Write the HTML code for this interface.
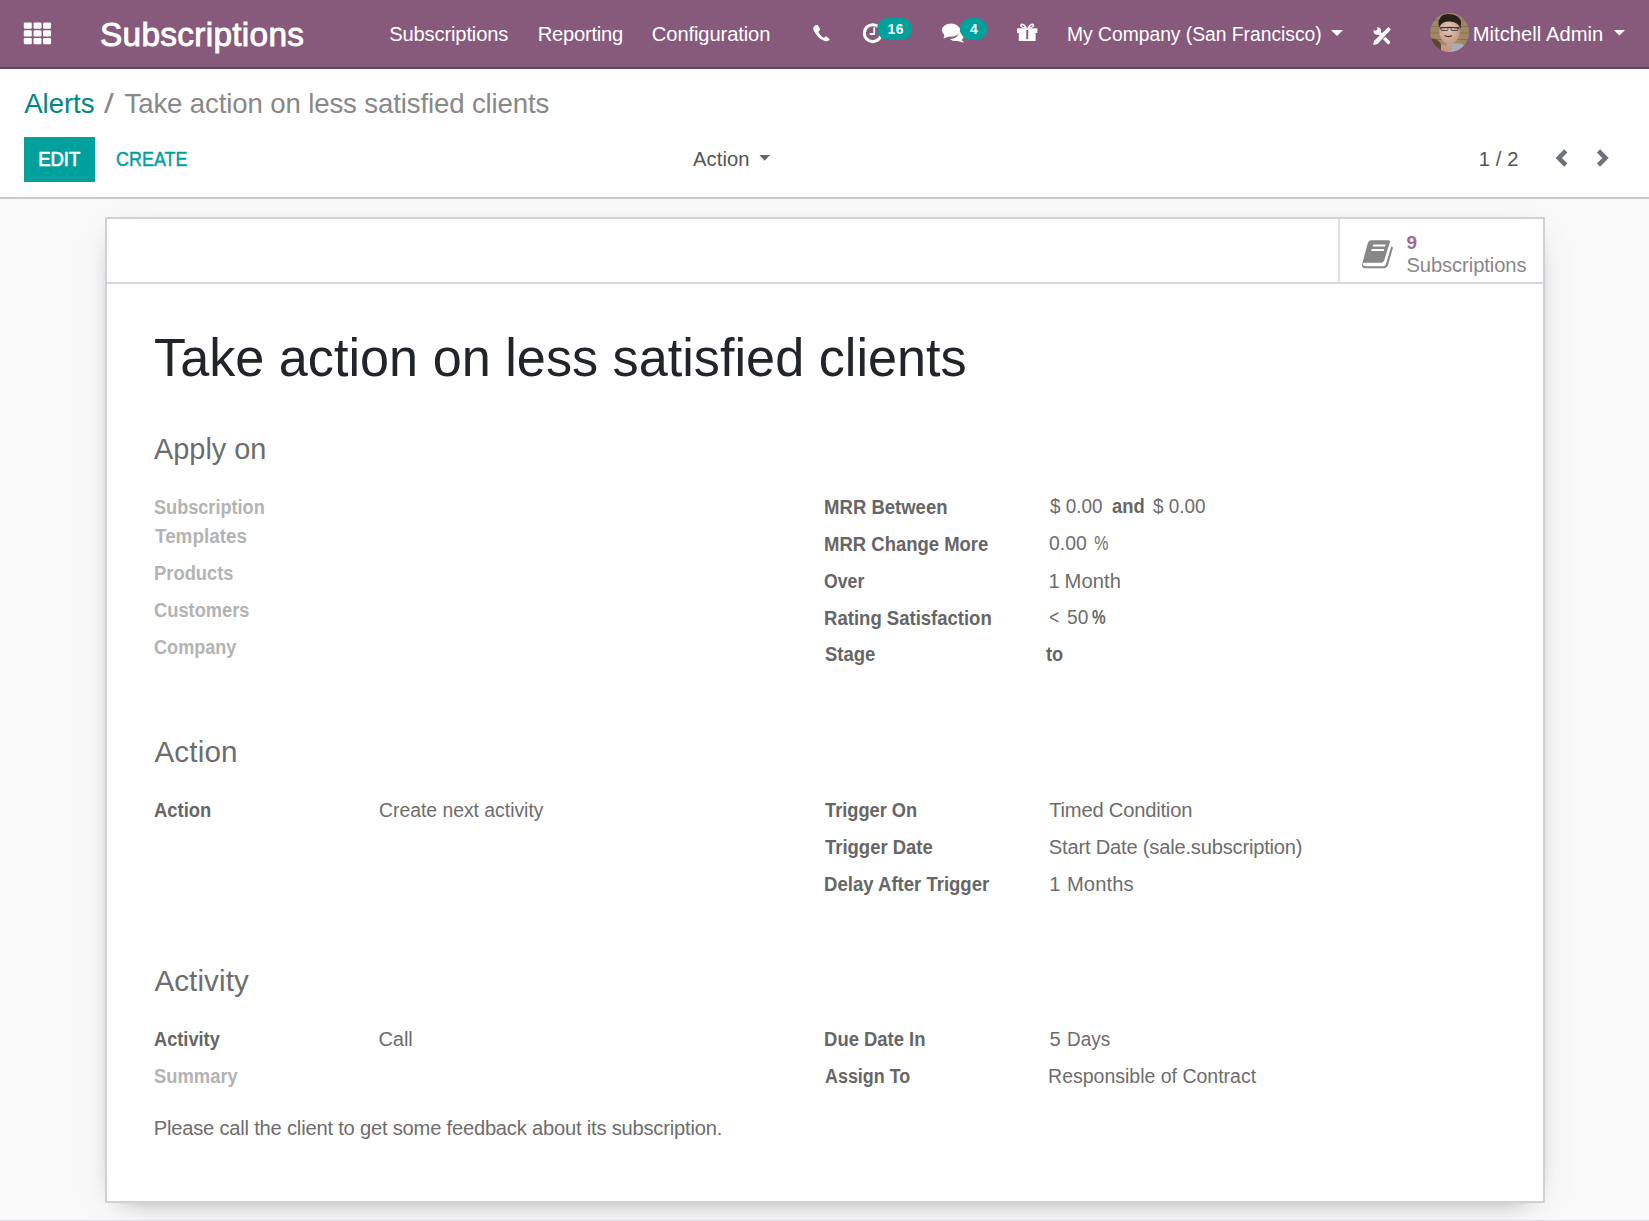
<!DOCTYPE html>
<html><head><meta charset="utf-8">
<style>
html,body{margin:0;padding:0;}
body{width:1649px;height:1221px;overflow:hidden;position:relative;background:#f9f9f9;font-family:"Liberation Sans",sans-serif;}
.t{position:absolute;white-space:pre;line-height:1;font-family:"Liberation Sans",sans-serif;}
.abs{position:absolute;}
#nav{left:0;top:0;width:1649px;height:67px;background:#875a7b;border-bottom:2px solid #62445a;}
#cp{left:0;top:69px;width:1649px;height:128px;background:#fff;border-bottom:2px solid #cacaca;}
#edit{left:24px;top:137px;width:71px;height:45px;background:#00a09d;}
#sheet{left:105px;top:217px;width:1436px;height:982px;background:#fff;border:2px solid #cdd2d9;box-shadow:0 8px 30px -18px rgba(0,0,0,0.62);}
#bbox{left:107px;top:282px;width:1436px;height:2px;background:#d3d8de;}
#statb{left:1338px;top:219px;width:2px;height:63px;background:#dde1e6;}
#botline{left:0;top:1220px;width:1649px;height:1px;background:#dadee3;}
</style></head><body>
<div id="nav" class="abs"></div>
<div id="cp" class="abs"></div>
<div id="edit" class="abs"></div>
<div id="sheet" class="abs"></div>
<div id="bbox" class="abs"></div>
<div id="statb" class="abs"></div>
<div id="botline" class="abs"></div>

<!-- grid icon -->
<svg class="abs" style="left:0;top:0" width="1649" height="69" viewBox="0 0 1649 69">
 <g fill="#fff">
  <rect x="23.8" y="22.5" width="8" height="6.3" rx="1.3"/><rect x="33.5" y="22.5" width="8" height="6.3" rx="1.3"/><rect x="43.1" y="22.5" width="8" height="6.3" rx="1.3"/>
  <rect x="23.8" y="30.2" width="8" height="6.3" rx="1.3"/><rect x="33.5" y="30.2" width="8" height="6.3" rx="1.3"/><rect x="43.1" y="30.2" width="8" height="6.3" rx="1.3"/>
  <rect x="23.8" y="37.9" width="8" height="6.3" rx="1.3"/><rect x="33.5" y="37.9" width="8" height="6.3" rx="1.3"/><rect x="43.1" y="37.9" width="8" height="6.3" rx="1.3"/>
 </g>
 <!-- phone -->
 <g fill="#fff">
  <path d="M815.5 25.2 L817.8 24.9 L820.2 29.6 L818.3 31.9 Q820.5 36 823.8 38 L826 36.3 L829.6 39 L829.2 40.3 Q827.5 41.6 825.3 41.3 Q816.8 38.3 813.2 29.2 Q812.8 26.8 815.5 25.2 Z"/>
 </g>
 <!-- clock -->
 <circle cx="872.8" cy="33.2" r="8.5" fill="none" stroke="#fff" stroke-width="3.1"/>
 <path d="M874.2 27.6 V34 H869.6" fill="none" stroke="#fff" stroke-width="1.8"/>
 <rect x="877" y="18" width="35" height="22" rx="11" fill="#00a09d"/>
 <!-- comments -->
 <g fill="#fff">
  <ellipse cx="951" cy="30.2" rx="9.1" ry="6.6"/>
  <path d="M944.5 34 L943.5 38.8 L950 36 Z"/>
  <path d="M957 31 Q963.5 32 963.8 36.5 Q963.6 38.6 961.5 40 L964.3 42.8 L957.5 41 Q953 41.5 950 39.2 Q957.5 38.5 959 33 Z"/>
 </g>
 <rect x="960" y="18" width="27" height="22" rx="11" fill="#00a09d"/>
 <!-- gift -->
 <g fill="#fff">
  <rect x="1017" y="28.3" width="20.4" height="4.6"/>
  <rect x="1018.8" y="32.4" width="16.8" height="8.6"/>
  <path d="M1027.2 28.6 Q1022 28.5 1020.3 26.3 Q1019.8 23.5 1022.3 23.6 Q1025 23.9 1027.2 28.3 Z M1022.2 25.3 Q1021.4 25.6 1022 26.5 Q1023.4 27.3 1025 27.3 Q1023.7 25.3 1022.2 25.3 Z" fill-rule="evenodd"/>
  <path d="M1027.2 28.6 Q1032.4 28.5 1034.1 26.3 Q1034.6 23.5 1032.1 23.6 Q1029.4 23.9 1027.2 28.3 Z M1032.2 25.3 Q1033 25.6 1032.4 26.5 Q1031 27.3 1029.4 27.3 Q1030.7 25.3 1032.2 25.3 Z" fill-rule="evenodd"/>
 </g>
 <rect x="1026.3" y="30" width="1.9" height="9.3" fill="#875a7b"/>
 <!-- carets -->
 <path d="M1331 30 H1343 L1337 36 Z" fill="#fff"/>
 <path d="M1613.8 30 H1625 L1619.4 35.6 Z" fill="#fff"/>
 <!-- tools -->
 <g fill="#fff">
  <path d="M1388.4 26.9 L1390.9 29.45 L1377.6 44 L1373 44.9 L1374.2 40.8 Z"/>
  <path d="M1382.9 39.2 L1385.4 36.9 L1390 41.4 Q1390.6 43.3 1389.2 44.1 Q1388.2 44.6 1387.3 43.8 Z"/>
  <circle cx="1377.3" cy="31" r="3.75"/>
  <path d="M1377.3 31 L1382.2 35.9" stroke="#fff" stroke-width="3.2"/>
 </g>
 <circle cx="1375.3" cy="28.7" r="2.15" fill="#875a7b"/>
 <!-- avatar -->
 <defs>
  <clipPath id="av"><circle cx="1449.6" cy="32.5" r="19.4"/></clipPath>
  <radialGradient id="face" cx="0.45" cy="0.4" r="0.65"><stop offset="0" stop-color="#e4c6bd"/><stop offset="1" stop-color="#c39683"/></radialGradient>
 </defs>
 <g clip-path="url(#av)">
  <rect x="1429" y="12" width="41" height="41" fill="#a08866"/>
  <g stroke="#806850" stroke-width="1" opacity="0.7">
   <path d="M1429 20 H1470 M1429 26.5 H1470 M1429 33 H1470 M1429 39.5 H1470 M1429 46 H1470"/>
  </g>
  <path d="M1430 38 Q1437 38 1441 44 L1442 53 H1429 Z" fill="#5e4434"/>
  <path d="M1445 45 Q1453 42 1463 44 L1466 53 H1446 Z" fill="#a7aeb5"/>
  <path d="M1441 44 Q1447 47 1452 45 L1452 53 H1441 Z" fill="#c39a86"/>
  <ellipse cx="1449.5" cy="31" rx="10.3" ry="13.2" fill="url(#face)"/>
  <path d="M1438.5 25 Q1438 15 1447 14 Q1458 13.5 1461 21 L1460.8 29 Q1459 22.5 1450 21.6 Q1442 21.3 1439.5 27 Z" fill="#2b1f19"/>
  <path d="M1439.5 27.8 Q1449.5 26.8 1459.5 28" stroke="#3e322e" stroke-width="1.3" fill="none"/>
  <rect x="1441" y="27.5" width="7" height="3" rx="1" fill="none" stroke="#4a3c38" stroke-width="0.9"/>
  <rect x="1451" y="27.5" width="7" height="3" rx="1" fill="none" stroke="#4a3c38" stroke-width="0.9"/>
  <path d="M1444.5 35.6 Q1448 37.6 1452 35.8" stroke="#4e2a26" stroke-width="1.1" fill="none"/>
 </g>
</svg>
<!-- control panel icons -->
<svg class="abs" style="left:0;top:69px" width="1649" height="130" viewBox="0 69 1649 130">
 <path d="M759.4 155 H770 L764.7 160.7 Z" fill="#666"/>
 <path d="M1567.4 152.5 L1564.2 149.3 L1555.6 158 L1564.2 166.8 L1567.4 163.6 L1562 158 Z" fill="#6c7278"/>
 <path d="M1596.9 152.5 L1600.1 149.3 L1608.7 158 L1600.1 166.8 L1596.9 163.6 L1602.3 158 Z" fill="#6c7278"/>
</svg>
<!-- book icon -->
<svg class="abs" style="left:1355px;top:235px" width="45" height="40" viewBox="1355 235 45 40">
 <g fill="#878787">
  <path d="M1371 240.2 H1388.8 Q1390.8 240.5 1389.6 243 L1384.2 260.5 Q1383.3 262.8 1381 262.8 H1364.3 Q1362.2 262.8 1362.8 264.8 Q1363.5 266.2 1365.5 266.2 H1383.7 Q1385.3 266.1 1385.8 264.6 L1391.3 246.2 L1393 247.6 L1387.8 265.8 Q1386.8 268.2 1384 268.2 H1364.5 Q1361.2 268 1362.2 263.8 L1367.8 243 Q1368.8 240.2 1371 240.2 Z"/>
 </g>
 <g fill="#fff">
  <rect x="1373" y="244.5" width="12.5" height="2" transform="skewX(-17)" style="transform-box:fill-box;transform-origin:center"/>
  <rect x="1371.5" y="249" width="12.5" height="2" transform="skewX(-17)" style="transform-box:fill-box;transform-origin:center"/>
 </g>
</svg>
<div class="t" style="left:99.96px;top:18.00px;font-size:33.4px;color:#ffffff;letter-spacing:0.299px;-webkit-text-stroke:0.9px #fff;">Subscriptions</div>
<div class="t" style="left:389.17px;top:24.00px;font-size:20.15px;color:#ffffff;letter-spacing:-0.142px;">Subscriptions</div>
<div class="t" style="left:537.73px;top:24.00px;font-size:20.15px;color:#ffffff;letter-spacing:-0.220px;">Reporting</div>
<div class="t" style="left:651.86px;top:24.00px;font-size:20.15px;color:#ffffff;letter-spacing:-0.107px;">Configuration</div>
<div class="t" style="left:1066.63px;top:24.00px;font-size:20.15px;color:#ffffff;transform:scaleX(0.956);transform-origin:1.57px 0;">My Company (San Francisco)</div>
<div class="t" style="left:1472.63px;top:24.00px;font-size:20.15px;color:#ffffff;letter-spacing:0.061px;">Mitchell Admin</div>
<div class="t" style="left:887.54px;top:23.00px;font-size:13.8px;color:#ffffff;font-weight:bold;letter-spacing:0.456px;">16</div>
<div class="t" style="left:969.90px;top:23.00px;font-size:13.8px;color:#ffffff;font-weight:bold;transform:scaleX(1.005);transform-origin:0.00px 0;">4</div>
<div class="t" style="left:24.30px;top:90.00px;font-size:27.6px;color:#008784;letter-spacing:-0.077px;">Alerts</div>
<div class="t" style="left:104.00px;top:90.00px;font-size:27.6px;color:#888888;transform:scaleX(1.288);transform-origin:0.00px 0;">/</div>
<div class="t" style="left:124.57px;top:90.00px;font-size:27.6px;color:#888888;letter-spacing:-0.129px;">Take action on less satisfied clients</div>
<div class="t" style="left:38.03px;top:149.00px;font-size:20.15px;color:#ffffff;transform:scaleX(0.916);transform-origin:1.57px 0;-webkit-text-stroke:0.7px #fff;">EDIT</div>
<div class="t" style="left:115.86px;top:149.00px;font-size:20.15px;color:#00a09d;transform:scaleX(0.889);transform-origin:0.94px 0;-webkit-text-stroke:0.45px #00a09d;">CREATE</div>
<div class="t" style="left:693.00px;top:149.00px;font-size:20.15px;color:#555555;letter-spacing:0.106px;">Action</div>
<div class="t" style="left:1478.64px;top:149.00px;font-size:20.15px;color:#555555;letter-spacing:0.142px;">1 / 2</div>
<div class="t" style="left:1406.51px;top:233.00px;font-size:19px;color:#9b6d8e;font-weight:bold;">9</div>
<div class="t" style="left:1406.47px;top:255.00px;font-size:20.15px;color:#888888;letter-spacing:-0.067px;">Subscriptions</div>
<div class="t" style="left:154.36px;top:331.00px;font-size:53.5px;color:#212529;transform:scaleX(0.976);transform-origin:0.84px 0;">Take action on less satisfied clients</div>
<div class="t" style="left:154.30px;top:434.00px;font-size:29.6px;color:#6d6d6d;transform:scaleX(0.976);transform-origin:0.00px 0;">Apply on</div>
<div class="t" style="left:154.49px;top:497.00px;font-size:20.15px;color:#b3b3b3;font-weight:bold;transform:scaleX(0.899);transform-origin:0.31px 0;">Subscription</div>
<div class="t" style="left:154.80px;top:526.00px;font-size:20.15px;color:#b3b3b3;font-weight:bold;transform:scaleX(0.937);transform-origin:0.00px 0;">Templates</div>
<div class="t" style="left:153.54px;top:563.00px;font-size:20.15px;color:#b3b3b3;font-weight:bold;transform:scaleX(0.910);transform-origin:1.26px 0;">Products</div>
<div class="t" style="left:154.17px;top:600.00px;font-size:20.15px;color:#b3b3b3;font-weight:bold;transform:scaleX(0.907);transform-origin:0.63px 0;">Customers</div>
<div class="t" style="left:154.17px;top:637.00px;font-size:20.15px;color:#b3b3b3;font-weight:bold;transform:scaleX(0.897);transform-origin:0.63px 0;">Company</div>
<div class="t" style="left:823.84px;top:497.00px;font-size:20.15px;color:#666666;font-weight:bold;transform:scaleX(0.919);transform-origin:1.26px 0;">MRR Between</div>
<div class="t" style="left:823.84px;top:534.00px;font-size:20.15px;color:#666666;font-weight:bold;transform:scaleX(0.917);transform-origin:1.26px 0;">MRR Change More</div>
<div class="t" style="left:824.47px;top:571.00px;font-size:20.15px;color:#666666;font-weight:bold;transform:scaleX(0.875);transform-origin:0.63px 0;">Over</div>
<div class="t" style="left:823.84px;top:608.00px;font-size:20.15px;color:#666666;font-weight:bold;transform:scaleX(0.919);transform-origin:1.26px 0;">Rating Satisfaction</div>
<div class="t" style="left:824.79px;top:644.00px;font-size:20.15px;color:#666666;font-weight:bold;transform:scaleX(0.916);transform-origin:0.31px 0;">Stage</div>
<div class="t" style="left:1049.80px;top:496.00px;font-size:20.15px;color:#6d6d6d;transform:scaleX(0.938);transform-origin:0.00px 0;">$ 0.00</div>
<div class="t" style="left:1111.69px;top:496.00px;font-size:20.15px;color:#666666;font-weight:bold;transform:scaleX(0.912);transform-origin:0.31px 0;">and</div>
<div class="t" style="left:1153.30px;top:496.00px;font-size:20.15px;color:#6d6d6d;transform:scaleX(0.938);transform-origin:0.00px 0;">$ 0.00</div>
<div class="t" style="left:1049.17px;top:533.00px;font-size:20.15px;color:#6d6d6d;transform:scaleX(0.961);transform-origin:0.63px 0;">0.00</div>
<div class="t" style="left:1094.27px;top:533.00px;font-size:20.15px;color:#6d6d6d;transform:scaleX(0.791);transform-origin:0.63px 0;">%</div>
<div class="t" style="left:1048.54px;top:571.00px;font-size:20.15px;color:#6d6d6d;">1</div>
<div class="t" style="left:1064.53px;top:571.00px;font-size:20.15px;color:#6d6d6d;letter-spacing:0.101px;">Month</div>
<div class="t" style="left:1048.86px;top:607.00px;font-size:20.15px;color:#6d6d6d;transform:scaleX(0.844);transform-origin:0.94px 0;">&lt;</div>
<div class="t" style="left:1067.07px;top:607.00px;font-size:20.15px;color:#6d6d6d;transform:scaleX(0.949);transform-origin:0.63px 0;">50</div>
<div class="t" style="left:1092.29px;top:607.00px;font-size:20.15px;color:#666666;font-weight:bold;transform:scaleX(0.762);transform-origin:0.31px 0;">%</div>
<div class="t" style="left:1045.60px;top:644.00px;font-size:20.15px;color:#666666;font-weight:bold;transform:scaleX(0.904);transform-origin:0.00px 0;">to</div>
<div class="t" style="left:154.40px;top:737.00px;font-size:29.6px;color:#6d6d6d;letter-spacing:0.179px;">Action</div>
<div class="t" style="left:154.09px;top:800.00px;font-size:20.15px;color:#666666;font-weight:bold;transform:scaleX(0.914);transform-origin:0.31px 0;">Action</div>
<div class="t" style="left:378.86px;top:800.00px;font-size:20.15px;color:#6d6d6d;transform:scaleX(0.960);transform-origin:0.94px 0;">Create next activity</div>
<div class="t" style="left:825.10px;top:800.00px;font-size:20.15px;color:#666666;font-weight:bold;transform:scaleX(0.905);transform-origin:0.00px 0;">Trigger On</div>
<div class="t" style="left:825.10px;top:837.00px;font-size:20.15px;color:#666666;font-weight:bold;transform:scaleX(0.917);transform-origin:0.00px 0;">Trigger Date</div>
<div class="t" style="left:823.84px;top:874.00px;font-size:20.15px;color:#666666;font-weight:bold;transform:scaleX(0.920);transform-origin:1.26px 0;">Delay After Trigger</div>
<div class="t" style="left:1049.19px;top:800.00px;font-size:20.15px;color:#6d6d6d;letter-spacing:-0.195px;">Timed Condition</div>
<div class="t" style="left:1048.87px;top:837.00px;font-size:20.15px;color:#6d6d6d;letter-spacing:-0.208px;">Start Date (sale.subscription)</div>
<div class="t" style="left:1049.24px;top:874.00px;font-size:20.15px;color:#6d6d6d;">1</div>
<div class="t" style="left:1066.93px;top:874.00px;font-size:20.15px;color:#6d6d6d;letter-spacing:0.125px;">Months</div>
<div class="t" style="left:154.40px;top:966.00px;font-size:29.6px;color:#6d6d6d;letter-spacing:0.094px;">Activity</div>
<div class="t" style="left:154.09px;top:1029.00px;font-size:20.15px;color:#666666;font-weight:bold;transform:scaleX(0.904);transform-origin:0.31px 0;">Activity</div>
<div class="t" style="left:378.46px;top:1029.00px;font-size:20.15px;color:#6d6d6d;letter-spacing:-0.146px;">Call</div>
<div class="t" style="left:154.09px;top:1066.00px;font-size:20.15px;color:#b3b3b3;font-weight:bold;transform:scaleX(0.912);transform-origin:0.31px 0;">Summary</div>
<div class="t" style="left:823.64px;top:1029.00px;font-size:20.15px;color:#666666;font-weight:bold;transform:scaleX(0.915);transform-origin:1.26px 0;">Due Date In</div>
<div class="t" style="left:824.59px;top:1066.00px;font-size:20.15px;color:#666666;font-weight:bold;transform:scaleX(0.888);transform-origin:0.31px 0;">Assign To</div>
<div class="t" style="left:1049.57px;top:1029.00px;font-size:20.15px;color:#6d6d6d;">5</div>
<div class="t" style="left:1066.73px;top:1029.00px;font-size:20.15px;color:#6d6d6d;transform:scaleX(0.938);transform-origin:1.57px 0;">Days</div>
<div class="t" style="left:1047.93px;top:1066.00px;font-size:20.15px;color:#6d6d6d;transform:scaleX(0.968);transform-origin:1.57px 0;">Responsible of Contract</div>
<div class="t" style="left:153.73px;top:1118.00px;font-size:20.15px;color:#6d6d6d;letter-spacing:-0.207px;">Please call the client to get some feedback about its subscription.</div>
</body></html>
